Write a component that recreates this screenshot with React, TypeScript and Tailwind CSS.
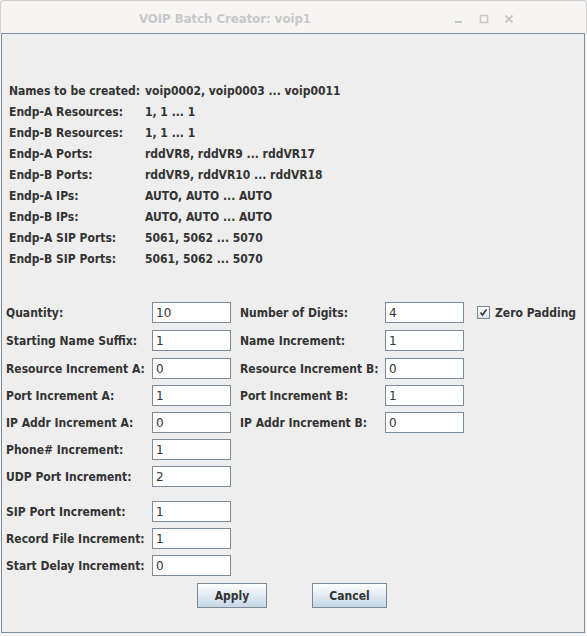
const info: [string, string][] = [
  ["Names to be created:", "voip0002, voip0003 ... voip0011"],
  ["Endp-A Resources:", "1, 1 ... 1"],
  ["Endp-B Resources:", "1, 1 ... 1"],
  ["Endp-A Ports:", "rddVR8, rddVR9 ... rddVR17"],
  ["Endp-B Ports:", "rddVR9, rddVR10 ... rddVR18"],
  ["Endp-A IPs:", "AUTO, AUTO ... AUTO"],
  ["Endp-B IPs:", "AUTO, AUTO ... AUTO"],
  ["Endp-A SIP Ports:", "5061, 5062 ... 5070"],
  ["Endp-B SIP Ports:", "5061, 5062 ... 5070"],
]

const Field = ({ value }: { value: string }) => (
  <div
    className="w-[79px] h-[21px] shrink-0 bg-white border border-[#7c8b99] pl-[3px] flex items-center font-normal text-[12px] text-[#333]"
    style={{ fontFamily: '"DejaVu Sans", sans-serif' }}
  >
    {value}
  </div>
)

const Row = ({ label, value, className = "" }: { label: string; value: string; className?: string }) => (
  <div className={`flex items-center h-[21px] ${className}`}>
    <span className="w-[146px] shrink-0">{label}</span>
    <Field value={value} />
  </div>
)

const Checkbox = () => (
  <svg width="13" height="13" viewBox="0 0 13 13">
    <defs>
      <linearGradient id="cb" x1="0" y1="0" x2="0" y2="1">
        <stop offset="0" stopColor="#ffffff" />
        <stop offset="1" stopColor="#d6e0ea" />
      </linearGradient>
    </defs>
    <rect x="0.5" y="0.5" width="12" height="12" fill="url(#cb)" stroke="#7a8a99" />
    <path d="M3.5 6.5 L5.5 9 L9.5 3.5" fill="none" stroke="#333" strokeWidth="1.6" />
  </svg>
)

const Button = ({ children, w }: { children: string; w: string }) => (
  <button
    className={`${w} h-[25px] border border-[#7a8a99] bg-gradient-to-b from-white to-[#c6d6e6] text-[12px] font-bold text-[#333]`}
  >
    {children}
  </button>
)

const Label2 = ({ children }: { children: string }) => (
  <span className="w-[145px] ml-[9px] shrink-0">{children}</span>
)

export default function App() {
  return (
    <div
      className="w-[587px] h-[636px] bg-[#f6f5f4] flex flex-col text-[#333] font-bold text-[12px] whitespace-nowrap"
      style={{ fontFamily: '"DejaVu Sans Condensed", "DejaVu Sans", sans-serif' }}
    >
      <div className="h-[33px] flex items-center pt-[3px] border-t border-x border-[#d0d0d0] rounded-t-[4px]">
        <div className="w-[448px] text-center text-[13px] text-[#c8c8c8]">
          VOIP Batch Creator: voip1
        </div>
        <div className="flex items-center gap-[15px] pl-[5px]">
          <svg width="10" height="10" viewBox="0 0 10 10">
            <rect x="1" y="7" width="7" height="2" fill="#c8c8c8" />
          </svg>
          <svg width="10" height="10" viewBox="0 0 10 10">
            <rect x="1.5" y="1.5" width="7" height="7" fill="none" stroke="#c8c8c8" strokeWidth="1.5" />
          </svg>
          <svg width="10" height="10" viewBox="0 0 10 10">
            <path d="M1.5 1.5 L8.5 8.5 M8.5 1.5 L1.5 8.5" stroke="#c8c8c8" strokeWidth="1.8" />
          </svg>
        </div>
      </div>

      <div className="flex-1 ml-[1px] mb-[3px] mr-[2px] bg-[#eeeeee] border-[1.5px] border-[#7b8ea1] flex flex-col">
        <div className="pt-[46px] pl-[7px] flex flex-col">
          {info.map(([l, v]) => (
            <div key={l} className="flex items-center h-[21px]">
              <span className="w-[136px] shrink-0">{l}</span>
              <span>{v}</span>
            </div>
          ))}
        </div>

        <div className="mt-[33px] pl-[4px] flex flex-col gap-[6px]">
          <div className="flex items-center h-[21px]">
            <Row label="Quantity:" value="10" />
            <Label2>Number of Digits:</Label2>
            <Field value="4" />
            <div className="ml-[13px] flex items-center gap-[5px]">
              <Checkbox />
              <span>Zero Padding</span>
            </div>
          </div>
          <div className="flex items-center mt-[1px]">
            <Row label="Starting Name Suffix:" value="1" />
            <Label2>Name Increment:</Label2>
            <Field value="1" />
          </div>
          <div className="flex items-center mt-[1px]">
            <Row label="Resource Increment A:" value="0" />
            <Label2>Resource Increment B:</Label2>
            <Field value="0" />
          </div>
          <div className="flex items-center">
            <Row label="Port Increment A:" value="1" />
            <Label2>Port Increment B:</Label2>
            <Field value="1" />
          </div>
          <div className="flex items-center">
            <Row label="IP Addr Increment A:" value="0" />
            <Label2>IP Addr Increment B:</Label2>
            <Field value="0" />
          </div>
          <Row label="Phone# Increment:" value="1" />
          <Row label="UDP Port Increment:" value="2" />
          <Row label="SIP Port Increment:" value="1" className="mt-[8px]" />
          <Row label="Record File Increment:" value="1" />
          <Row label="Start Delay Increment:" value="0" />
        </div>

        <div className="mt-[7px] flex justify-center gap-[45px] pr-[2px]">
          <Button w="w-[70px]">Apply</Button>
          <Button w="w-[75px]">Cancel</Button>
        </div>
      </div>
    </div>
  )
}
